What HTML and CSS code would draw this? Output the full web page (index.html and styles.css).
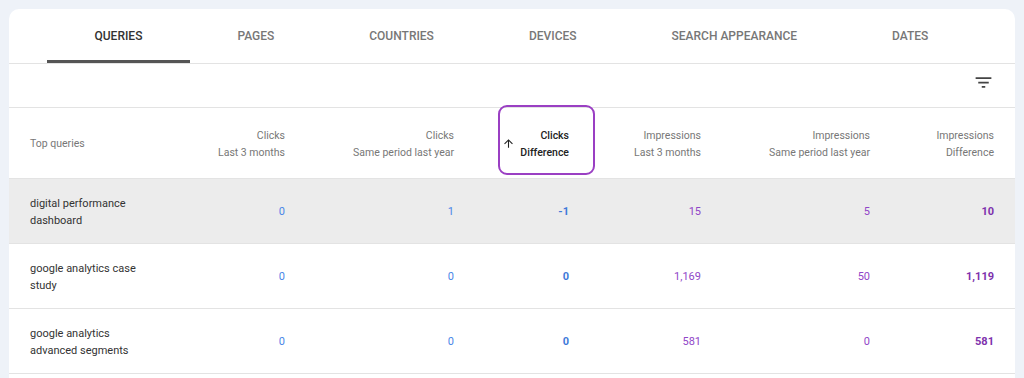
FILE: index.html
```html
<!DOCTYPE html>
<html lang="en">
<head>
<meta charset="utf-8">
<title>Performance table</title>
<link rel="stylesheet" href="styles.css">
</head>
<body>
<div class="card">
  <nav class="tabs">
    <div class="tab active">QUERIES</div>
    <div class="tab">PAGES</div>
    <div class="tab">COUNTRIES</div>
    <div class="tab">DEVICES</div>
    <div class="tab">SEARCH APPEARANCE</div>
    <div class="tab">DATES</div>
  </nav>
  <div class="toolbar">
    <svg class="filter-icon" width="21" height="21" viewBox="0 0 24 24" aria-hidden="true"><path d="M10 18h4v-2h-4v2zM3 6v2h18V6H3zm3 7h12v-2H6v2z" fill="#444"/></svg>
  </div>
  <div class="table">
    <div class="row head">
      <div class="cell left">Top queries</div>
      <div class="cell num"><span>Clicks<br>Last 3 months</span></div>
      <div class="cell num"><span>Clicks<br>Same period last year</span></div>
      <div class="cell num sorted">
        <svg class="sort-arrow" width="13" height="13" viewBox="0 0 24 24" aria-hidden="true"><path d="M4 12l1.41 1.41L11 7.83V20h2V7.83l5.58 5.59L20 12l-8-8-8 8z" fill="#222"/></svg>
        <span>Clicks<br>Difference</span>
        <div class="highlight"></div>
      </div>
      <div class="cell num"><span>Impressions<br>Last 3 months</span></div>
      <div class="cell num"><span>Impressions<br>Same period last year</span></div>
      <div class="cell num"><span>Impressions<br>Difference</span></div>
    </div>
    <div class="row hover">
      <div class="cell left query">digital performance dashboard</div>
      <div class="cell num clicks">0</div>
      <div class="cell num clicks">1</div>
      <div class="cell num clicks strong">-1</div>
      <div class="cell num impr">15</div>
      <div class="cell num impr">5</div>
      <div class="cell num impr strong">10</div>
    </div>
    <div class="row">
      <div class="cell left query">google analytics case study</div>
      <div class="cell num clicks">0</div>
      <div class="cell num clicks">0</div>
      <div class="cell num clicks strong">0</div>
      <div class="cell num impr">1,169</div>
      <div class="cell num impr">50</div>
      <div class="cell num impr strong">1,119</div>
    </div>
    <div class="row">
      <div class="cell left query">google analytics advanced segments</div>
      <div class="cell num clicks">0</div>
      <div class="cell num clicks">0</div>
      <div class="cell num clicks strong">0</div>
      <div class="cell num impr">581</div>
      <div class="cell num impr">0</div>
      <div class="cell num impr strong">581</div>
    </div>
  </div>
</div>
</body>
</html>
```

FILE: styles.css
```css
* { box-sizing: border-box; }
html, body { margin: 0; }
body {
  background: #eef2f8;
  padding: 9px 9px 0 9px;
  font-family: Roboto, "Liberation Sans", Arial, sans-serif;
  overflow: hidden;
}
.card {
  width: 1006px;
  background: #fff;
  border-radius: 10px 10px 0 0;
  padding-bottom: 40px;
}
.tabs {
  display: flex;
  padding-left: 38px;
  height: 55px;
  border-bottom: 1px solid #e3e3e3;
}
.tab {
  display: flex;
  align-items: center;
  height: 54px;
  padding: 2px 47.5px 0 47.5px;
  font-size: 12px;
  font-weight: 500;
  color: #777;
  border-bottom: 3px solid transparent;
}
.tab.active {
  color: #333;
  border-bottom-color: #555;
}
.toolbar {
  height: 44px;
  border-bottom: 1px solid #e3e3e3;
  display: flex;
  justify-content: flex-end;
  align-items: flex-start;
  padding: 8px 21px 0 0;
}
.filter-icon { display: block; }
.row {
  display: grid;
  grid-template-columns: 162px 135px 169px 115px 132px 169px 124px;
  height: 65px;
  border-bottom: 1px solid #e3e3e3;
}
.row.head { height: 71px; }
.row.hover { background: #ececec; }
.cell {
  display: flex;
  align-items: center;
  padding: 1px 21px 0 21px;
  font-size: 11px;
  line-height: 17px;
}
.cell.left { justify-content: flex-start; }
.cell.num { justify-content: flex-end; text-align: right; }
.head .cell {
  font-size: 10.5px;
  color: #777;
}
.head .cell.sorted {
  position: relative;
  color: #222;
  font-weight: 500;
  gap: 5px;
}
.sort-arrow { display: block; }
.highlight {
  position: absolute;
  left: 23px;
  top: -3px;
  width: 97px;
  height: 70px;
  border: 2px solid #9a3fc3;
  border-radius: 9px;
}
.query { color: #333; }
.clicks { color: #4a86e8; }
.impr { color: #9146c8; }
.strong { font-weight: 700; }
.clicks.strong { color: #3f7ad9; }
.impr.strong { color: #7e32ad; }
```
